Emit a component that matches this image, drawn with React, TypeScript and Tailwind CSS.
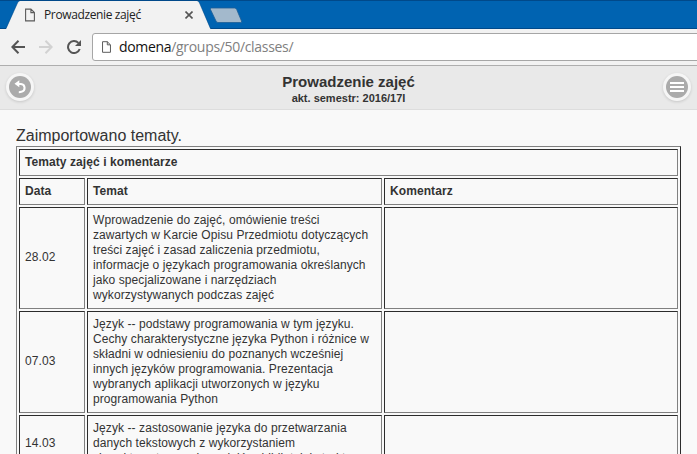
import React from "react";

const rows = [
  {
    date: "28.02",
    lines: [
      "Wprowadzenie do zajęć, omówienie treści",
      "zawartych w Karcie Opisu Przedmiotu dotyczących",
      "treści zajęć i zasad zaliczenia przedmiotu,",
      "informacje o językach programowania określanych",
      "jako specjalizowane i narzędziach",
      "wykorzystywanych podczas zajęć",
    ],
  },
  {
    date: "07.03",
    lines: [
      "Język -- podstawy programowania w tym języku.",
      "Cechy charakterystyczne języka Python i różnice w",
      "składni w odniesieniu do poznanych wcześniej",
      "innych języków programowania. Prezentacja",
      "wybranych aplikacji utworzonych w języku",
      "programowania Python",
    ],
  },
  {
    date: "14.03",
    lines: [
      "Język -- zastosowanie języka do przetwarzania",
      "danych tekstowych z wykorzystaniem",
      "charakterystycznych modułów, bibliotek i struktur",
    ],
  },
];

const cell =
  "border border-t-[#2c2c2c] border-l-[#2c2c2c] border-r-[#808080] border-b-[#808080] p-[5px]";

function PageIcon({ className }: { className: string }) {
  return (
    <svg className={className} viewBox="0 0 10 13" fill="none" stroke="#5a5a5a" strokeWidth="1.1">
      <path d="M.6.6h5.3l3.5 3.5v8.3H.6zM5.9.6v3.5h3.5" />
    </svg>
  );
}

function TabStrip() {
  return (
    <div className="relative h-[29px] bg-[#0063b1]">
      <svg className="absolute inset-0" width="697" height="29">
        <path d="M0 .5H697M0 28.5H697" stroke="#00498a" />
        <path d="M6 29L17.5 3Q18.3 1 20 1H197Q198.800 1 199.500 3L210.500 29Z" fill="#f2f2f2" />
        <path d="M6 28.500L17.500 3Q18.300 .5 20 .5H197Q198.800 .5 199.500 3L210.500 28.500" fill="none" stroke="#00498a" strokeOpacity=".5" />
        <path d="M211.500 8H234.500Q236 8 236.700 9.500L241.500 21Q242 22.500 240.500 22.500H218Q216.500 22.500 216 21L210.500 9.500Q210 8 211.500 8Z" fill="#a3b9cc" stroke="#1e5e96" strokeWidth=".8" />
      </svg>
      <div className="relative flex h-[29px] items-center pl-[25px]">
        <PageIcon className="h-[14px] w-[10px]" />
        <span className="ml-[9px] w-[98px] whitespace-nowrap font-['Open_Sans',sans-serif] text-[12px] leading-[16px] tracking-[-0.37px] text-[#222]">
          Prowadzenie zajęć
        </span>
        <svg className="ml-[43px] h-2 w-2" viewBox="0 0 8 8" stroke="#555" strokeWidth="1.6">
          <path d="M.5.5l7 7M7.500.5l-7 7" />
        </svg>
      </div>
    </div>
  );
}

function Toolbar() {
  return (
    <div className="flex h-[37px] items-center border-b border-[#aeaeae] bg-[#f2f2f2] pl-[11px]">
      <svg className="h-[14px] w-[14px] shrink-0" viewBox="0 0 14 14" fill="none" stroke="#555" strokeWidth="2">
        <path d="M14 7H1.500M7.500.8L1.400 7l6.100 6.200" />
      </svg>
      <svg className="ml-[14px] h-[14px] w-[14px] shrink-0" viewBox="0 0 14 14" fill="none" stroke="#d2d2d2" strokeWidth="2">
        <path d="M0 7h12.500M6.500.8L12.600 7l-6.100 6.200" />
      </svg>
      <svg className="ml-[14px] h-[14px] w-[14px] shrink-0" viewBox="0 0 14 14" fill="none">
        <path d="M11.400 2.900A6 6 0 1 0 12.700 9" stroke="#555" strokeWidth="2" />
        <path d="M14 0v6H8z" fill="#555" />
      </svg>
      <div className="-mr-1 ml-[11px] flex h-[28px] flex-1 items-center rounded-[3px] border border-[#a6a6a6] bg-white pl-[9px]">
        <PageIcon className="h-[12px] w-[9px]" />
        <span className="ml-[8px] whitespace-nowrap font-['Open_Sans',sans-serif] text-[14px] leading-[18px] tracking-[-0.32px] text-[#808080]">
          <span className="text-[#111]">domena</span>/groups/50/classes/
        </span>
      </div>
    </div>
  );
}

function RoundButton({ children }: { children: React.ReactNode }) {
  return (
    <div className="flex h-[28px] w-[28px] items-center justify-center rounded-full bg-[#f6f6f6] shadow-[0_1px_3px_rgba(0,0,0,0.15)]">
      <div className="flex h-[22px] w-[22px] items-center justify-center rounded-full bg-[#ababab]">
        {children}
      </div>
    </div>
  );
}

function PageHeader() {
  return (
    <header className="flex h-[44px] items-start justify-between border-b border-[#dddddd] bg-[#e9e9e9] px-[6px] pt-[7px]">
      <RoundButton>
        <svg width="14" height="14" viewBox="0 0 14 14">
          <path d="M5 4H8A3.900 3.900 0 0 1 8.500 11.700Q7.500 12.300 5.800 12.300" fill="none" stroke="#fff" strokeWidth="2" />
          <path d="M1.500 3.800L6.300 .3v7z" fill="#fff" />
        </svg>
      </RoundButton>
      <div className="text-center font-bold text-[#333]">
        <h1 className="text-[15px] leading-[18px]">Prowadzenie zajęć</h1>
        <p className="text-[11px] leading-[14px]">akt. semestr: 2016/17I</p>
      </div>
      <RoundButton>
        <svg width="14" height="10" viewBox="0 0 14 10" fill="#fff">
          <path d="M0 0h14v2H0zM0 4h14v2H0zM0 8h14v2H0z" />
        </svg>
      </RoundButton>
    </header>
  );
}

export default function App() {
  return (
    <div className="h-[454px] w-[697px] overflow-hidden bg-[#f9f9f9] font-['Liberation_Sans',Arial,sans-serif] text-[#333]">
      <TabStrip />
      <Toolbar />
      <PageHeader />
      <main className="px-4 pt-4">
        <p className="h-[20px] text-[16px] leading-[20px]">Zaimportowano tematy.</p>
        <table className="w-[665px] table-fixed border-separate border-spacing-[2px] border border-t-[#808080] border-l-[#808080] border-r-[#2c2c2c] border-b-[#2c2c2c] text-left text-[12px] leading-[15px] tracking-[0.08px]">
          <colgroup>
            <col className="w-[66px]" />
            <col className="w-[295px]" />
            <col className="w-[294px]" />
          </colgroup>
          <thead>
            <tr>
              <th colSpan={3} className={cell}>Tematy zajęć i komentarze</th>
            </tr>
            <tr>
              <th className={cell}>Data</th>
              <th className={cell}>Temat</th>
              <th className={cell}>Komentarz</th>
            </tr>
          </thead>
          <tbody>
            {rows.map((row) => (
              <tr key={row.date}>
                <td className={`${cell} pb-[6px]`}>{row.date}</td>
                <td className={cell}>
                  {row.lines.map((line) => (
                    <div key={line} className="whitespace-nowrap">{line}</div>
                  ))}
                </td>
                <td className={cell} />
              </tr>
            ))}
          </tbody>
        </table>
      </main>
    </div>
  );
}
